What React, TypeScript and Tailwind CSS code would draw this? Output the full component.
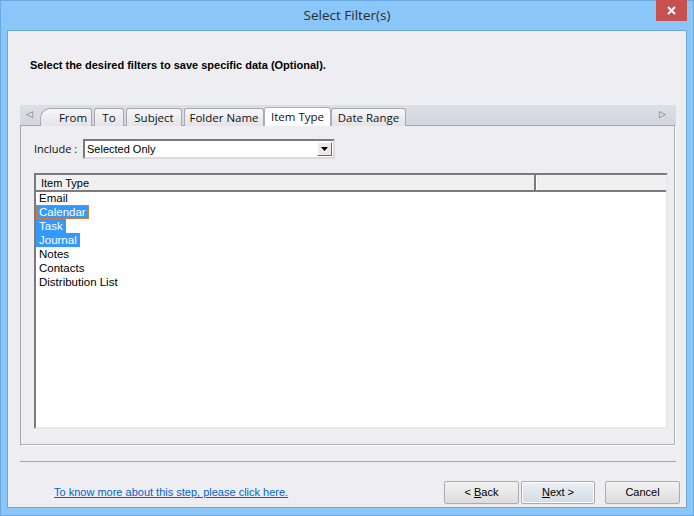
import React from 'react';

const tabs = [
    { t: 'From', w: 52 },
    { t: 'To', w: 30 },
    { t: 'Subject', w: 56 },
    { t: 'Folder Name', w: 80 },
    { t: 'Item Type', w: 67 },
    { t: 'Date Range', w: 75 },
];
const items = ['Email', 'Calendar', 'Task', 'Journal', 'Notes', 'Contacts', 'Distribution List'];
const selected = ['Calendar', 'Task', 'Journal'];

const ui = { fontFamily: '"Liberation Sans", Arial, sans-serif' };
const seg = { fontFamily: '"Open Sans", "Noto Sans", "Liberation Sans", sans-serif' };

export default function App() {
    return (
        <div className="w-[694px] h-[516px] bg-[#8ac6f8] flex flex-col border border-[#6aa9e0]" style={ui}>
            {/* Title bar */}
            <div className="h-[29px] flex items-center relative shrink-0">
                <div className="flex-1 text-center text-[13.5px] text-[#2b2b2b] -mt-[1px]" style={seg}>Select Filter(s)</div>
                <button className="absolute right-[6px] top-[-1px] w-[31px] h-[21px] bg-[#c75050] flex items-center justify-center">
                    <svg width="9" height="9" viewBox="0 0 9 9"><path d="M1 1 L8 8 M8 1 L1 8" stroke="white" strokeWidth="2" /></svg>
                </button>
            </div>

            {/* Client */}
            <div className="flex-1 mx-[6px] mb-[7px] bg-[#eeedf2] border border-[#6fa8d8] flex flex-col px-[12px]">
                <div className="h-[74px] pt-[26px] pl-[10px] text-[11px] font-bold text-black">
                    Select the desired filters to save specific data (Optional).
                </div>

                {/* Tab control */}
                <div className="w-[656px] flex flex-col">
                    <div className="h-[20px] bg-gradient-to-b from-[#dcdfe6] to-[#d2d5dd] flex items-end relative">
                        <span className="absolute left-[6px] top-[3px] text-[9px] text-[#666]">◁</span>
                        <span className="absolute right-[10px] top-[3px] text-[9px] text-[#666]">▷</span>
                        <div className="flex items-end ml-[20px] h-[18px]">
                            {tabs.map(({ t, w }) => {
                                const active = t === 'Item Type';
                                return (
                                    <div
                                        key={t}
                                        className={`-mb-px flex items-center justify-center text-[11.5px] text-[#111] border border-b-0 rounded-t-[3px] ${active ? 'bg-white border-[#b0b0b8] h-[19px] z-10 -ml-[2px]' : 'h-[18px] bg-gradient-to-b from-[#f7f7f9] to-[#e3e3e8] border-[#a8a8b0] mr-[2px]'} ${t === 'From' ? 'pl-[14px] rounded-tl-[10px]' : ''}`}
                                        style={{ ...seg, width: w }}
                                    >
                                        {t}
                                    </div>
                                );
                            })}
                        </div>
                    </div>
                    <div className="h-[321px] border border-[#a8a8b0] border-r-white border-b-white shadow-[inset_-1px_-1px_0_#b0b0b8] px-[13px] pt-[13px]">
                        <div className="flex items-center h-[20px]">
                            <span className="text-[11px] text-[#111] w-[49px] whitespace-nowrap" style={seg}>Include :</span>
                            <div className="w-[252px] h-[20px] bg-white border-2 border-[#7a7a7a] border-b-[#dcdcdc] border-r-[#dcdcdc] flex items-center">
                                <span className="flex-1 pl-[2px] text-[11px] text-black">Selected Only</span>
                                <div className="w-[15px] h-[14px] mr-[1px] bg-[#ecebe8] border border-[#fff] border-r-[#6b6b6b] border-b-[#6b6b6b] flex items-center justify-center">
                                    <svg width="7" height="4" viewBox="0 0 7 4"><path d="M0 0 H7 L3.5 4 Z" fill="black" /></svg>
                                </div>
                            </div>
                        </div>

                        <div className="mt-[14px] w-[634px] h-[256px] bg-white border-2 border-[#7b7b7b] border-r-[#e8e8e8] border-b-[#e8e8e8] flex flex-col">
                            <div className="h-[17px] flex bg-[#f0f0f0] border-b-2 border-[#7b7b7b] text-[11px] text-black">
                                <div className="w-[500px] pl-[5px] border-r-2 border-[#7b7b7b] leading-[16px]">Item Type</div>
                                <div className="flex-1 border-l border-white" />
                            </div>
                            <div className="-mt-[1px] flex flex-col text-[11.5px]">
                                {items.map(it => {
                                    const sel = selected.includes(it);
                                    return (
                                        <div key={it} className="h-[14px] flex">
                                            <span className={`leading-[14px] pl-[3px] pr-[3px] ${sel ? 'bg-[#3399ff] text-white' : 'text-black'} ${it === 'Calendar' ? 'outline outline-1 outline-dotted outline-[#d7843c] -outline-offset-1' : ''}`}>
                                                {it}
                                            </span>
                                        </div>
                                    );
                                })}
                            </div>
                        </div>
                    </div>
                </div>

                <div className="mt-[15px] w-[656px] border-t border-[#a8a8b0]" />

                <div className="flex items-center mt-[19px] h-[23px]">
                    <a className="ml-[34px] text-[11px] text-[#0066cc] underline">To know more about this step, please click here.</a>
                    <div className="flex-1" />
                    <div className="flex gap-[2px] text-[11px] text-black">
                        <button className="w-[75px] h-[23px] border border-[#acacac] rounded-[2px] bg-gradient-to-b from-[#f2f2f2] to-[#dcdcdc]">&lt; <u>B</u>ack</button>
                        <button className="w-[74px] h-[23px] border border-[#acacac] rounded-[2px] bg-gradient-to-b from-[#eaf0f6] to-[#d5dbe3] shadow-[inset_0_0_0_1px_#fff]"><u>N</u>ext &gt;</button>
                    </div>
                    <button className="ml-[10px] mr-[-6px] w-[75px] h-[23px] border border-[#acacac] rounded-[2px] bg-gradient-to-b from-[#f2f2f2] to-[#dcdcdc] text-[11px] text-black">Cancel</button>
                </div>
            </div>
        </div>
    );
}
